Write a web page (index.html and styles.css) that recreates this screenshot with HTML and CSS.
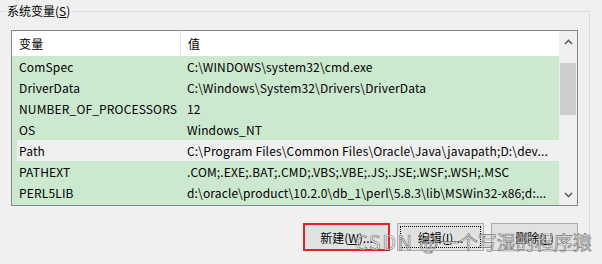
FILE: index.html
```html
<!DOCTYPE html>
<html lang="zh-CN">
<head>
  <meta charset="UTF-8">
  <meta name="viewport" content="width=device-width, initial-scale=1.0">
  <title>系统变量</title>
  <link rel="stylesheet" href="styles.css">
</head>
<body>
  <fieldset class="group">
    <legend class="group-title">系统变量(<u>S</u>)</legend>

    <div class="list">
      <div class="table">
        <div class="head">
          <div class="col-name">变量</div>
          <div class="col-value">值</div>
        </div>
        <div class="row">
          <div class="col-name">ComSpec</div>
          <div class="col-value">C:\WINDOWS\system32\cmd.exe</div>
        </div>
        <div class="row">
          <div class="col-name">DriverData</div>
          <div class="col-value">C:\Windows\System32\Drivers\DriverData</div>
        </div>
        <div class="row">
          <div class="col-name">NUMBER_OF_PROCESSORS</div>
          <div class="col-value">12</div>
        </div>
        <div class="row">
          <div class="col-name">OS</div>
          <div class="col-value">Windows_NT</div>
        </div>
        <div class="row row-hover">
          <div class="col-name">Path</div>
          <div class="col-value">C:\Program Files\Common Files\Oracle\Java\javapath;D:\dev...</div>
        </div>
        <div class="row">
          <div class="col-name">PATHEXT</div>
          <div class="col-value">.COM;.EXE;.BAT;.CMD;.VBS;.VBE;.JS;.JSE;.WSF;.WSH;.MSC</div>
        </div>
        <div class="row">
          <div class="col-name">PERL5LIB</div>
          <div class="col-value">d:\oracle\product\10.2.0\db_1\perl\5.8.3\lib\MSWin32-x86;d:...</div>
        </div>
      </div>

      <!-- 竖向滚动条 -->
      <div class="scrollbar">
        <div class="arrow">
          <svg width="9" height="6" viewBox="0 0 9 6"><polyline points="1,5 4.5,1.5 8,5" fill="none" stroke="#606060" stroke-width="1.6"/></svg>
        </div>
        <div class="track">
          <div class="thumb"></div>
        </div>
        <div class="arrow">
          <svg width="9" height="6" viewBox="0 0 9 6"><polyline points="1,1 4.5,4.5 8,1" fill="none" stroke="#606060" stroke-width="1.6"/></svg>
        </div>
      </div>
    </div>

    <div class="buttons">
      <button class="btn btn-marked">新建(<u>W</u>)...</button>
      <button class="btn btn-focus"><span class="focus-ring">编辑(<u>I</u>)...</span></button>
      <button class="btn">删除(<u>L</u>)</button>
    </div>
  </fieldset>

  <div class="watermark"><span class="wm-latin">CSDN @</span>一个写湿的程序猿</div>
</body>
</html>
```

FILE: styles.css
```css
html, body{
  margin: 0;
  height: 264px;
  overflow: hidden;
}
body{
  position: relative;
  background: #f0f0f0;
  color: #000;
  font-family: "Noto Sans CJK SC", "Liberation Sans", sans-serif;
  font-size: 12px;
}
/* 分组框：左边和下边在截图外 */
.group{
  margin: 3px 12px 0 0;
  padding: 0 11px 0 7px;
  border: 1px solid #dcdcdc;
  border-left: 0;
  border-bottom: 0;
  min-width: 0;
}
.group-title{
  padding: 0 2px 0 0;
  line-height: 16px;
}
.list{
  display: flex;
  width: 565px;
  height: 174px;
  margin: 11px 0 0 4px;
  border: 1px solid #828790;
  background: #cce8cf;
  letter-spacing: 0.15px;
}
.table{
  flex: 1;
}
.head{
  display: flex;
  height: 25px;
  line-height: 25px;
  background: #fff;
}
.head .col-name{
  border-right: 1px solid #e5e5e5;
}
.row{
  display: flex;
  height: 21px;
  line-height: 21px;
  white-space: nowrap;
}
.row-hover{
  background: linear-gradient(to right, #cce8cf 5px, #efefef 5px);
}
.col-name{
  width: 161px;
  padding-left: 7px;
  flex: none;
}
.col-value{
  padding-left: 7px;
  overflow: hidden;
}
.scrollbar{
  display: flex;
  flex-direction: column;
  width: 18px;
  background: #f0f0f0;
}
.arrow{
  display: flex;
  align-items: center;
  justify-content: center;
  height: 21px;
}
.track{
  flex: 1;
  padding: 11px 1px 0 1px;
}
.thumb{
  height: 52px;
  background: #cdcdcd;
}
.buttons{
  display: flex;
  justify-content: flex-end;
  gap: 7px;
  width: 571px;
  margin-top: 17px;
}
.btn{
  width: 87px;
  height: 28px;
  padding: 0;
  border: 1px solid #adadad;
  background: #e1e1e1;
  color: #000;
  font: inherit;
}
.btn-marked{
  border: 2px solid #e8202a;
}
.btn-focus{
  padding: 2px;
}
.focus-ring{
  display: flex;
  align-items: center;
  justify-content: center;
  height: 100%;
  border: 1px dotted #000;
  box-sizing: border-box;
}
/* 图片水印 */
.watermark{
  position: absolute;
  left: 355px;
  top: 229px;
  font-size: 19px;
  line-height: 26px;
  color: rgba(250, 250, 250, 0.7);
  -webkit-text-stroke: 0.7px rgba(70, 70, 70, 0.7);
  white-space: nowrap;
}
.wm-latin{
  font-size: 20px;
  letter-spacing: 1.5px;
}
```
